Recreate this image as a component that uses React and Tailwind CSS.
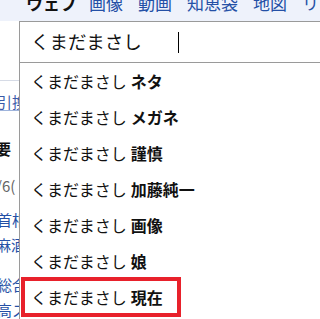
const suggestions = ["ネタ", "メガネ", "謹慎", "加藤純一", "画像", "娘", "現在"];
const tabs = ["画像", "動画", "知恵袋", "地図", "リアルタイム"];

export default function App() {
  return (
    <div className="relative h-[319px] w-[320px] overflow-hidden bg-white font-['Noto_Sans_CJK_JP','Noto_Sans',sans-serif]">
      <div className="flex h-[21px] items-start overflow-hidden whitespace-nowrap bg-[#eef2fb] pl-[26px] text-[17px] leading-[17px]">
        <span className="-mt-[6px] font-bold text-[#111]">ウェブ</span>
        <div className="-mt-[6px] ml-[12px] flex gap-[15px] text-[#2450a6]">
          {tabs.map((t) => (
            <span key={t}>{t}</span>
          ))}
        </div>
      </div>

      <div className="flex">
        <div className="w-[19px] shrink-0 overflow-hidden whitespace-nowrap text-[15px] leading-[20px]">
          <div className="mt-[59px] h-px w-full bg-[#d6dbe6]" />
          <div className="-ml-[3px] mt-[11px] text-[#3a5aa8]">引換</div>
          <div className="mt-[-2px] h-px w-full bg-[#9fb4dc]" />
          <div className="-ml-[4px] mt-[28px] font-bold text-[#111]">要</div>
          <div className="-ml-[4px] mt-[17px] text-[#666]">/6(</div>
          <div className="-ml-[3px] mt-[14px] text-[#2450a6]">首相</div>
          <div className="-ml-[4px] mt-[5px] text-[#2450a6]">麻酒</div>
          <div className="-ml-[3px] mt-[20px] text-[#2450a6]">総合</div>
          <div className="-ml-[3px] mt-[5px] text-[#2450a6]">高ス</div>
        </div>

        <div className="min-w-0 flex-1 border-l border-[#9a9a9a]">
          <div className="flex h-[42px] items-center border-y border-[#9a9a9a] pl-[11px] text-[18.5px] text-[#111]">
            <span>くまだまさし</span>
            <span className="ml-[36px] h-[21px] w-px bg-black" />
          </div>
          <ul className="text-[16px] text-[#111]">
            {suggestions.map((s) => (
              <li key={s} className="flex h-[36px] items-center pl-[11px]">
                <span>くまだまさし</span>
                <span className="ml-[4px] font-bold">{s}</span>
              </li>
            ))}
          </ul>
        </div>
      </div>

      <div className="absolute left-[21px] top-[277px] h-[40px] w-[160px] border-4 border-[#e8212b]" />
    </div>
  );
}
